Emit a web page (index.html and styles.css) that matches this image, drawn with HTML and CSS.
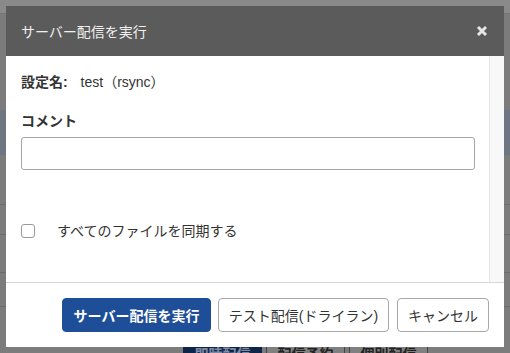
FILE: index.html
```html
<!DOCTYPE html>
<html lang="ja">
<head>
  <meta charset="UTF-8">
  <title>サーバー配信を実行</title>
  <link rel="stylesheet" href="styles.css">
</head>
<body>
  <!-- 背景のページ（オーバーレイで暗くなっている） -->
  <div class="page">
    <div class="page-actions">
      <span class="page-btn primary">即時配信</span>
      <span class="page-btn">配信予約</span>
      <span class="page-btn">個別配信</span>
    </div>
  </div>

  <!-- モーダル -->
  <div class="modal">
    <div class="modal-header">
      <span class="modal-title">サーバー配信を実行</span>
      <svg class="modal-close" width="12" height="12" viewBox="0 0 12 12">
        <path d="M2 2 L10 10 M10 2 L2 10" stroke="#e6e6e6" stroke-width="3" stroke-linecap="butt"/>
      </svg>
    </div>
    <div class="modal-body">
      <div class="modal-content">
        <div class="setting-row">
          <span class="setting-label">設定名:</span>
          <span class="setting-value">test（rsync）</span>
        </div>
        <div class="field-label">コメント</div>
        <input type="text" class="comment-input">
        <label class="check-row">
          <span class="check-box"></span>
          <span class="check-text">すべてのファイルを同期する</span>
        </label>
      </div>
      <div class="scroll-track"></div>
    </div>
    <div class="modal-footer">
      <button class="btn btn-primary btn-run">サーバー配信を実行</button>
      <button class="btn btn-test">テスト配信(ドライラン)</button>
      <button class="btn btn-cancel">キャンセル</button>
    </div>
  </div>
</body>
</html>
```

FILE: styles.css
```css
* {
  box-sizing: border-box;
}
body {
  margin: 0;
  width: 510px;
  height: 353px;
  overflow: hidden;
  font-family: "Liberation Sans", "Noto Sans CJK JP", sans-serif;
  color: #333;
}

/* 背景ページ */
.page {
  position: relative;
  height: 353px;
  background:
    linear-gradient(#8a8a8a 0, #8a8a8a 13px, #767676 13px, #767676 14px, transparent 14px),
    linear-gradient(to bottom, transparent 110px, #6e7781 110px, #6e7781 155px, transparent 155px),
    linear-gradient(to bottom, transparent 204px, #6c6c6c 204px, #6c6c6c 205px, transparent 205px),
    linear-gradient(to bottom, transparent 234px, #6c6c6c 234px, #6c6c6c 235px, transparent 235px),
    linear-gradient(to bottom, transparent 272px, #6c6c6c 272px, #6c6c6c 273px, transparent 273px),
    linear-gradient(to bottom, transparent 306px, #6c6c6c 306px, #6c6c6c 307px, transparent 307px),
    #7c7c7c;
}
.page-actions {
  position: absolute;
  left: 183px;
  top: 343px;
  display: flex;
  gap: 4px;
}
.page-btn {
  width: 79px;
  height: 22px;
  border: 1px solid #444;
  background: #808080;
  color: #222;
  font-size: 14px;
  font-weight: bold;
  text-align: center;
  line-height: 20px;
}
.page-btn.primary {
  background: #0f2548;
  color: #7d8aa6;
  border-color: #0f2548;
}

/* モーダル */
.modal {
  position: absolute;
  left: 6px;
  top: 6px;
  width: 498px;
  height: 341px;
  background: #fff;
  display: flex;
  flex-direction: column;
}
.modal-header {
  height: 50px;
  background: #5b5b5b;
  display: flex;
  align-items: center;
  justify-content: space-between;
  padding: 0 16px 0 15px;
}
.modal-title {
  color: #f0f0f0;
  font-size: 14px;
}
.modal-body {
  flex: 1;
  display: flex;
  border-bottom: 1px solid #d6d6d6;
}
.modal-content {
  flex: 1;
  padding: 16px 14px 0 15px;
}
.scroll-track {
  width: 15px;
  background: #f8f8f8;
  border-left: 1px solid #e8e8e8;
}
.setting-row {
  height: 20px;
  line-height: 20px;
  font-size: 14px;
}
.setting-label {
  font-weight: bold;
  margin-right: 9px;
}
.field-label {
  margin-top: 19px;
  font-size: 14px;
  font-weight: bold;
  line-height: 20px;
}
.comment-input {
  display: block;
  width: 100%;
  height: 33px;
  margin-top: 6px;
  border: 1px solid #a6a6a6;
  border-radius: 3px;
}
.check-row {
  display: flex;
  align-items: center;
  margin-top: 51px;
  font-size: 14px;
}
.check-box {
  width: 14px;
  height: 14px;
  border: 1px solid #9a9a9a;
  border-radius: 3px;
  margin-right: 22px;
}
.check-text {
  line-height: 20px;
}
.modal-footer {
  height: 64px;
  display: flex;
  justify-content: flex-end;
  align-items: center;
  gap: 7px;
  padding-right: 15px;
}
.btn {
  height: 34px;
  padding: 0;
  font-family: inherit;
  font-size: 14px;
  color: #333;
  background: #fff;
  border: 1px solid #a8a8a8;
  border-radius: 4px;
}
.btn-primary {
  background: #1f4e99;
  border-color: #1f4e99;
  color: #fff;
  font-weight: bold;
}
.btn-run {
  width: 149px;
}
.btn-test {
  width: 171px;
  margin-right: 1px;
}
.btn-cancel {
  width: 92px;
}
```
